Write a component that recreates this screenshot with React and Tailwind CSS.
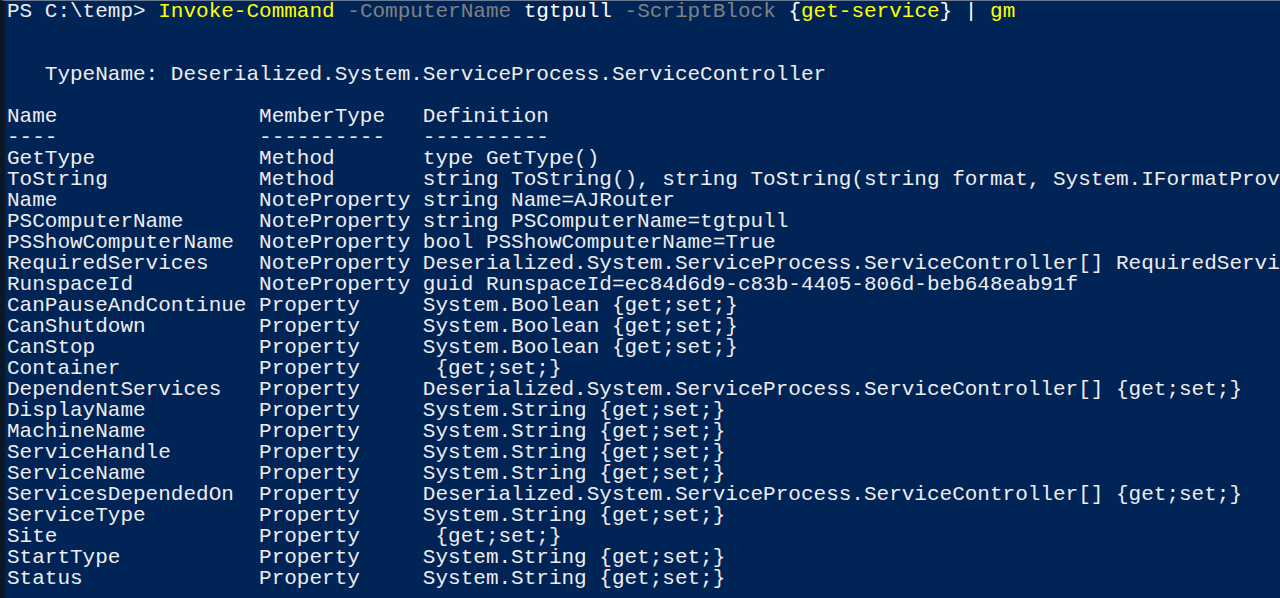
import React from "react";

const members = [
  ["GetType", "Method", "type GetType()"],
  ["ToString", "Method", "string ToString(), string ToString(string format, System.IFormatProvider formatProvider)"],
  ["Name", "NoteProperty", "string Name=AJRouter"],
  ["PSComputerName", "NoteProperty", "string PSComputerName=tgtpull"],
  ["PSShowComputerName", "NoteProperty", "bool PSShowComputerName=True"],
  ["RequiredServices", "NoteProperty", "Deserialized.System.ServiceProcess.ServiceController[] RequiredServices=System.ServiceProcess.ServiceController[]"],
  ["RunspaceId", "NoteProperty", "guid RunspaceId=ec84d6d9-c83b-4405-806d-beb648eab91f"],
  ["CanPauseAndContinue", "Property", "System.Boolean {get;set;}"],
  ["CanShutdown", "Property", "System.Boolean {get;set;}"],
  ["CanStop", "Property", "System.Boolean {get;set;}"],
  ["Container", "Property", " {get;set;}"],
  ["DependentServices", "Property", "Deserialized.System.ServiceProcess.ServiceController[] {get;set;}"],
  ["DisplayName", "Property", "System.String {get;set;}"],
  ["MachineName", "Property", "System.String {get;set;}"],
  ["ServiceHandle", "Property", "System.String {get;set;}"],
  ["ServiceName", "Property", "System.String {get;set;}"],
  ["ServicesDependedOn", "Property", "Deserialized.System.ServiceProcess.ServiceController[] {get;set;}"],
  ["ServiceType", "Property", "System.String {get;set;}"],
  ["Site", "Property", " {get;set;}"],
  ["StartType", "Property", "System.String {get;set;}"],
  ["Status", "Property", "System.String {get;set;}"],
];

// Get-Member table: Name column padded to 20, MemberType to 13
const row = (a, b, c) => a.padEnd(20, " ") + b.padEnd(13, " ") + c;

export default function App() {
  return (
    <div className="h-[598px] w-[1280px] overflow-hidden bg-[#012456] border-l-[5px] border-[#0b1626] border-t border-t-[#6b7a94]">
      <pre className="pl-[2px] text-[#eeedf0] font-['Liberation_Mono',monospace] text-[21px] leading-[21px] whitespace-pre">
        <div>
          <span>PS C:\temp&gt; </span>
          <span className="text-[#ffff00]">Invoke-Command</span>
          <span className="text-[#808080]"> -ComputerName</span>
          <span className="text-white"> tgtpull</span>
          <span className="text-[#808080]"> -ScriptBlock</span>
          <span className="text-white"> {"{"}</span>
          <span className="text-[#ffff00]">get-service</span>
          <span className="text-white">{"}"} | </span>
          <span className="text-[#ffff00]">gm</span>
        </div>
        <div> </div>
        <div> </div>
        <div>   TypeName: Deserialized.System.ServiceProcess.ServiceController</div>
        <div> </div>
        <div>{row("Name", "MemberType", "Definition")}</div>
        <div>{row("----", "----------", "----------")}</div>
        {members.map(([a, b, c]) => (
          <div key={a}>{row(a, b, c)}</div>
        ))}
      </pre>
    </div>
  );
}
